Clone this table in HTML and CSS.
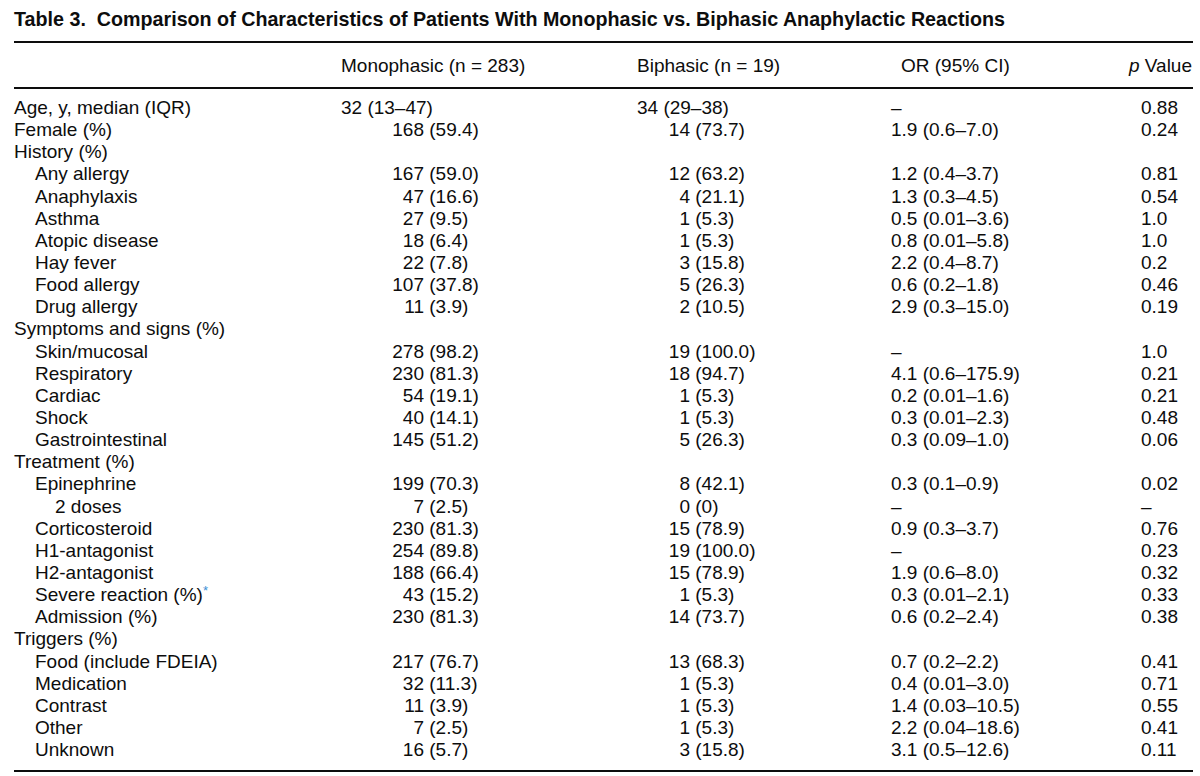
FILE: index.html
```html
<!DOCTYPE html>
<html lang="en">
<head>
<meta charset="utf-8">
<title>Table 3</title>
<link rel="stylesheet" href="styles.css">
</head>
<body>
<div class="page">
  <h1 class="title">Table 3.&nbsp; Comparison of Characteristics of Patients With Monophasic vs. Biphasic Anaphylactic Reactions</h1>
  <div class="table">
    <div class="row head">
      <div></div>
      <div>Monophasic (n = 283)</div>
      <div>Biphasic (n = 19)</div>
      <div class="or-head">OR (95% CI)</div>
      <div class="p-head"><i>p</i> Value</div>
    </div>
    <div class="tbody">
      <div class="row"><div>Age, y, median (IQR)</div><div>32 (13–47)</div><div>34 (29–38)</div><div>–</div><div>0.88</div></div>
      <div class="row"><div>Female (%)</div><div><span class="n1">168</span> (59.4)</div><div><span class="n2">14</span> (73.7)</div><div>1.9 (0.6–7.0)</div><div>0.24</div></div>
      <div class="row"><div>History (%)</div><div></div><div></div><div></div><div></div></div>
      <div class="row"><div class="in1">Any allergy</div><div><span class="n1">167</span> (59.0)</div><div><span class="n2">12</span> (63.2)</div><div>1.2 (0.4–3.7)</div><div>0.81</div></div>
      <div class="row"><div class="in1">Anaphylaxis</div><div><span class="n1">47</span> (16.6)</div><div><span class="n2">4</span> (21.1)</div><div>1.3 (0.3–4.5)</div><div>0.54</div></div>
      <div class="row"><div class="in1">Asthma</div><div><span class="n1">27</span> (9.5)</div><div><span class="n2">1</span> (5.3)</div><div>0.5 (0.01–3.6)</div><div>1.0</div></div>
      <div class="row"><div class="in1">Atopic disease</div><div><span class="n1">18</span> (6.4)</div><div><span class="n2">1</span> (5.3)</div><div>0.8 (0.01–5.8)</div><div>1.0</div></div>
      <div class="row"><div class="in1">Hay fever</div><div><span class="n1">22</span> (7.8)</div><div><span class="n2">3</span> (15.8)</div><div>2.2 (0.4–8.7)</div><div>0.2</div></div>
      <div class="row"><div class="in1">Food allergy</div><div><span class="n1">107</span> (37.8)</div><div><span class="n2">5</span> (26.3)</div><div>0.6 (0.2–1.8)</div><div>0.46</div></div>
      <div class="row"><div class="in1">Drug allergy</div><div><span class="n1">11</span> (3.9)</div><div><span class="n2">2</span> (10.5)</div><div>2.9 (0.3–15.0)</div><div>0.19</div></div>
      <div class="row"><div>Symptoms and signs (%)</div><div></div><div></div><div></div><div></div></div>
      <div class="row"><div class="in1">Skin/mucosal</div><div><span class="n1">278</span> (98.2)</div><div><span class="n2">19</span> (100.0)</div><div>–</div><div>1.0</div></div>
      <div class="row"><div class="in1">Respiratory</div><div><span class="n1">230</span> (81.3)</div><div><span class="n2">18</span> (94.7)</div><div>4.1 (0.6–175.9)</div><div>0.21</div></div>
      <div class="row"><div class="in1">Cardiac</div><div><span class="n1">54</span> (19.1)</div><div><span class="n2">1</span> (5.3)</div><div>0.2 (0.01–1.6)</div><div>0.21</div></div>
      <div class="row"><div class="in1">Shock</div><div><span class="n1">40</span> (14.1)</div><div><span class="n2">1</span> (5.3)</div><div>0.3 (0.01–2.3)</div><div>0.48</div></div>
      <div class="row"><div class="in1">Gastrointestinal</div><div><span class="n1">145</span> (51.2)</div><div><span class="n2">5</span> (26.3)</div><div>0.3 (0.09–1.0)</div><div>0.06</div></div>
      <div class="row"><div>Treatment (%)</div><div></div><div></div><div></div><div></div></div>
      <div class="row"><div class="in1">Epinephrine</div><div><span class="n1">199</span> (70.3)</div><div><span class="n2">8</span> (42.1)</div><div>0.3 (0.1–0.9)</div><div>0.02</div></div>
      <div class="row"><div class="in2">2 doses</div><div><span class="n1">7</span> (2.5)</div><div><span class="n2">0</span> (0)</div><div>–</div><div>–</div></div>
      <div class="row"><div class="in1">Corticosteroid</div><div><span class="n1">230</span> (81.3)</div><div><span class="n2">15</span> (78.9)</div><div>0.9 (0.3–3.7)</div><div>0.76</div></div>
      <div class="row"><div class="in1">H1-antagonist</div><div><span class="n1">254</span> (89.8)</div><div><span class="n2">19</span> (100.0)</div><div>–</div><div>0.23</div></div>
      <div class="row"><div class="in1">H2-antagonist</div><div><span class="n1">188</span> (66.4)</div><div><span class="n2">15</span> (78.9)</div><div>1.9 (0.6–8.0)</div><div>0.32</div></div>
      <div class="row"><div class="in1">Severe reaction (%)<sup class="note">*</sup></div><div><span class="n1">43</span> (15.2)</div><div><span class="n2">1</span> (5.3)</div><div>0.3 (0.01–2.1)</div><div>0.33</div></div>
      <div class="row"><div class="in1">Admission (%)</div><div><span class="n1">230</span> (81.3)</div><div><span class="n2">14</span> (73.7)</div><div>0.6 (0.2–2.4)</div><div>0.38</div></div>
      <div class="row"><div>Triggers (%)</div><div></div><div></div><div></div><div></div></div>
      <div class="row"><div class="in1">Food (include FDEIA)</div><div><span class="n1">217</span> (76.7)</div><div><span class="n2">13</span> (68.3)</div><div>0.7 (0.2–2.2)</div><div>0.41</div></div>
      <div class="row"><div class="in1">Medication</div><div><span class="n1">32</span> (11.3)</div><div><span class="n2">1</span> (5.3)</div><div>0.4 (0.01–3.0)</div><div>0.71</div></div>
      <div class="row"><div class="in1">Contrast</div><div><span class="n1">11</span> (3.9)</div><div><span class="n2">1</span> (5.3)</div><div>1.4 (0.03–10.5)</div><div>0.55</div></div>
      <div class="row"><div class="in1">Other</div><div><span class="n1">7</span> (2.5)</div><div><span class="n2">1</span> (5.3)</div><div>2.2 (0.04–18.6)</div><div>0.41</div></div>
      <div class="row"><div class="in1">Unknown</div><div><span class="n1">16</span> (5.7)</div><div><span class="n2">3</span> (15.8)</div><div>3.1 (0.5–12.6)</div><div>0.11</div></div>
    </div>
  </div>
</div>
</body>
</html>
```

FILE: styles.css
```css
html, body {
  margin: 0;
  background: #ffffff;
}

body {
  color: #0d0d0d;
  font-family: "Liberation Sans", Arial, Helvetica, sans-serif;
}

.page {
  padding: 8px 7px 0 14px;
}

.title {
  margin: 0 0 11px;
  font-size: 19.7px;
  font-weight: bold;
  line-height: 22px;
  white-space: nowrap;
}

.table {
  border-top: 2px solid #0d0d0d;
  border-bottom: 2px solid #0d0d0d;
}

.row {
  display: grid;
  grid-template-columns: 327px 296px 254px 250px 1fr;
  font-size: 19px;
  line-height: 22.14px;
  white-space: nowrap;
}

.head {
  line-height: 22px;
  padding: 12px 0 10px;
  border-bottom: 2px solid #0d0d0d;
}

.or-head {
  padding-left: 10px;
}

.p-head {
  margin-left: -40px;
  padding-right: 1px;
  text-align: right;
}

.tbody {
  padding: 8px 0 9px;
}

.in1 {
  padding-left: 21px;
}

.in2 {
  padding-left: 41px;
}

.n1,
.n2 {
  display: inline-block;
  text-align: right;
}

.n1 {
  width: 83px;
}

.n2 {
  width: 53px;
}

.note {
  color: #3b8fd4;
  font-size: 13px;
  line-height: 0;
  vertical-align: 6px;
}
```
